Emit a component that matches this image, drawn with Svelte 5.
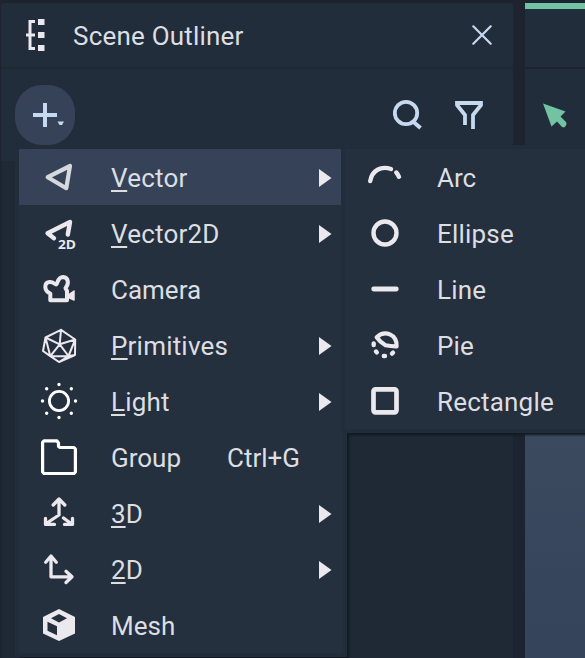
<script>
  const menu = [
    { icon: 'vector', key: 'V', rest: 'ector', sub: true, active: true },
    { icon: 'vector2d', key: 'V', rest: 'ector2D', sub: true },
    { icon: 'camera', rest: 'Camera', tight: true },
    { icon: 'primitives', key: 'P', rest: 'rimitives', sub: true },
    { icon: 'light', key: 'L', rest: 'ight', sub: true },
    { icon: 'group', rest: 'Group', shortcut: 'Ctrl+G', tight: true },
    { icon: 'axes3d', key: '3', rest: 'D', sub: true, tight: true },
    { icon: 'axes2d', key: '2', rest: 'D', sub: true, tight: true },
    { icon: 'mesh', rest: 'Mesh', tight: true }
  ];
  const shapes = [
    { icon: 'arc', rest: 'Arc', tight: true },
    { icon: 'ellipse', rest: 'Ellipse' },
    { icon: 'line', rest: 'Line' },
    { icon: 'pie', rest: 'Pie' },
    { icon: 'rectangle', rest: 'Rectangle' }
  ];
</script>

{#snippet glyph(name)}
  <svg class="glyph" viewBox="0 0 40 40" width="40" height="40">
    {#if name === 'vector'}
      <path d="M8.7 20.2 31 9 27.3 31.2Z" stroke="#d5d9dd" stroke-width="4.200" />
    {:else if name === 'vector2d'}
      <path d="M15 25.2 8.6 20.2 31 9 28.8 21.5" stroke-width="4.400" />
      <text x="19" y="36" textLength="18" lengthAdjust="spacingAndGlyphs">2D</text>
    {:else if name === 'camera'}
      <path d="M11.3 31.3V24.5C5 22 4.5 14 10.5 13 14 12.500 16 15.500 17 15.500 19 15.500 18 8 24 8 30 8.500 30 15 26.500 19L28 22V31.300Z" stroke-width="4" />
      <path class="solid" d="M28.500 26.500 35 22V31L28.500 28Z" stroke-width="1.500" />
    {:else if name === 'primitives'}
      <path d="M22 4.800 36.200 14.500 36 30 20 37 4 26 6.500 12.500ZM6.500 12.500 20.700 19.300 22 4.800M20.700 19.300 36.200 14.500 29.500 31 20.700 19.300 11.300 31.200 6.500 12.500M4 26 11.300 31.200 20 37 29.500 31 36 30M11.300 31.200 29.500 31" stroke-width="2" />
    {:else if name === 'light'}
      <g stroke="#fff">
        <circle cx="20" cy="20" r="9.600" stroke-width="2.800" />
        <path d="M20 3.500v.01M20 36.500v.01M3.500 20h.01M36.500 20h.01M7.700 7.700h.01M32.300 7.700h.01M7.700 32.300h.01M32.300 32.300h.01" stroke-width="3.400" />
      </g>
    {:else if name === 'group'}
      <path d="M5 3.900H18L19.500 6V9.500L21 10.500H35L36.400 12V35L35 36.500H5L3.600 35V5.400Z" stroke="#fff" stroke-width="3.200" />
    {:else if name === 'axes3d'}
      <path d="M20 7V22L8 30M14.200 12 20 6 25.800 12M6.500 25.500V31.400H15.500M24.500 25 32 30.500M33.500 25.500V31.400H25.500" stroke-width="3.300" />
    {:else if name === 'axes2d'}
      <path d="M12 8V27.800H32M6.700 13.300 12 7 17.300 13.300M27 22.300 33 27.800 27 33.500" stroke-width="3.300" />
    {:else if name === 'mesh'}
      <path class="solid" fill-rule="evenodd" stroke="none" d="M20 4 36 12V28.500L20 36 4 28.500V12ZM20 9 12 13.300 20 17.500 28 13.300ZM8.500 16.800V25.700L18 30.300V21.300Z" />
    {:else if name === 'arc'}
      <path d="M5.200 24C7 13.500 16 8.500 26 12M31.300 15.500Q33 17.500 34 19.800" stroke-width="4.400" />
    {:else if name === 'ellipse'}
      <circle cx="20" cy="20" r="11.500" stroke-width="4.400" />
    {:else if name === 'line'}
      <path d="M8.700 20H31.300" stroke-width="4.800" />
    {:else if name === 'pie'}
      <path d="M11.700 12.200C20 4.500 32 9.500 31.600 21.400Q26 21.500 20.500 20.300 15 17 11.700 12.200Z" stroke-width="4.200" />
      <path d="M8.700 18.500V20M11 26.500 11.800 27.400M18.800 31H20M27 28.600 28 27.700" stroke-width="4.400" />
    {:else if name === 'rectangle'}
      <rect x="8.500" y="8.300" width="23" height="23" rx="2" stroke-width="4.700" />
    {/if}
  </svg>
{/snippet}

{#snippet row(item)}
  <div class="item" class:active={item.active} class:tight={item.tight}>
    {@render glyph(item.icon)}
    <span class="label">{#if item.key}<span class="key">{item.key}</span>{/if}{item.rest}</span>
    {#if item.shortcut}<span class="shortcut">{item.shortcut}</span>{/if}
    {#if item.sub}
      <svg class="more" width="13" height="18" viewBox="0 0 13 18"><path d="M0 0 12.500 9 0 18Z" fill="#ebe8ee" /></svg>
    {/if}
  </div>
{/snippet}

<div class="app">
  <section class="outliner">
    <header>
      <svg width="20" height="34" viewBox="0 0 20 34">
        <path d="M10 3.500H5V30.500H10M1 17H10" fill="none" stroke="#ebe8ee" stroke-width="3" />
        <path d="M13 1h6.500v6h-6.500zM13 14h6.500v6h-6.500zM13 27h6.500v6h-6.500z" fill="#ebe8ee" />
      </svg>
      <span class="title">Scene Outliner</span>
      <svg class="close" width="20" height="20" viewBox="0 0 20 20">
        <path d="M1.300 1.300 18.700 18.700M18.700 1.300 1.300 18.700" fill="none" stroke="#c6d9ee" stroke-width="2.200" stroke-linecap="round" />
      </svg>
    </header>
    <div class="toolbar">
      <div class="add">
        <svg width="60" height="60" viewBox="0 0 60 60">
          <path d="M30 18V42M18 30H42" stroke="#c6d9ee" stroke-width="4" />
          <path d="M42.500 36.500H49L47 40H44.500Z" fill="#c6d9ee" />
        </svg>
      </div>
      <svg class="search" width="30" height="32" viewBox="0 0 30 32">
        <circle cx="13" cy="14" r="11.200" fill="none" stroke="#c6d9ee" stroke-width="3.800" />
        <path d="M20 22.500 27.500 29" stroke="#c6d9ee" stroke-width="4" />
      </svg>
      <svg width="30" height="32" viewBox="0 0 30 32">
        <path d="M11 26V16L3 6V4H27V6L19 16V30" fill="none" stroke="#c6d9ee" stroke-width="3.800" />
      </svg>
    </div>
    <div class="tree"></div>
  </section>
  <section class="viewport">
    <div class="tab"></div>
    <div class="tools">
      <svg width="26" height="26" viewBox="0 0 26 26">
        <path d="M1 0.500 23.500 8.500 18.500 13.500 24 19Q25.500 22 22 24.500L20 24 15 18.500 9.500 23.500Z" fill="#72c3a2" />
      </svg>
    </div>
    <div class="canvas"></div>
  </section>
</div>

<div class="menu main">
  {#each menu as item}{@render row(item)}{/each}
</div>
<div class="menu sub">
  {#each shapes as item}{@render row(item)}{/each}
</div>

<style>
  :global(body) { background: #1e242f; overflow: hidden; }
  .app {
    width: 585px; height: 658px; box-sizing: border-box;
    display: flex; gap: 12px; padding: 3px 0 0 1px;
    background: #1e242f; overflow: hidden;
  }
  .app, .menu { font: 26px/30px Roboto, sans-serif; letter-spacing: 0.2px; color: #dcdee2; }
  svg { display: block; flex: none; }
  .outliner { width: 512px; display: flex; flex-direction: column; background: #1e2935; border-radius: 4px 4px 0 0; }
  header {
    height: 64px; box-sizing: border-box; margin-bottom: 2px; padding: 0 21px 0 24px;
    display: flex; align-items: center; background: #222d3c; border-radius: 4px 4px 0 0;
  }
  .title { margin-left: 28px; padding-top: 1px; }
  .close { margin-left: auto; }
  .toolbar {
    height: 92px; box-sizing: border-box; padding: 16px 29px 16px 14px;
    display: flex; align-items: center; background: #222d3c; border-radius: 4px 4px 0 0;
  }
  .add { width: 60px; height: 60px; border-radius: 27px; background: #364258; }
  .search { margin: 0 31px 0 auto; }
  .tree { flex: 1; background: #1e2935; border-left: 1px solid #1e242f; }
  .viewport { flex: 1; display: flex; flex-direction: column; }
  .tab { height: 58px; border-top: 6px solid #72c3a2; background: #222d3c; margin-bottom: 2px; }
  .tools { height: 92px; box-sizing: border-box; padding: 34px 0 0 17px; background: #222d3c; }
  .canvas { flex: 1; background: linear-gradient(#3c4b5f, #3b4a5e 54%, #35435b); }
  .menu { position: absolute; top: 145px; border: 4px solid #222d3c; background: #25303f; }
  .main { left: 15px; width: 324px; box-shadow: 3px 3px 2px -1px #101820; }
  .sub { left: 341px; width: 240px; box-shadow: 8px 2px 2px #101820; }
  .item { height: 56px; box-sizing: border-box; display: flex; align-items: center; padding: 0 12px 0 20px; }
  .tight { letter-spacing: 0; }
  .active { background: #364258; }
  .label { margin-left: 32px; padding-top: 2px; white-space: nowrap; }
  .key { text-decoration: underline 2px; text-underline-offset: 3px; text-decoration-skip-ink: none; }
  .shortcut { margin-left: 46px; padding-top: 2px; }
  .more { margin-left: auto; margin-right: -1px; position: relative; top: 1px; }
  .glyph { fill: none; stroke: #ebe8ee; stroke-linecap: round; stroke-linejoin: round; }
  .glyph .solid { fill: #ebe8ee; }
  .glyph text { font: 700 13px "Open Sans", sans-serif; letter-spacing: 0; fill: #ebe8ee; stroke: none; }
</style>
